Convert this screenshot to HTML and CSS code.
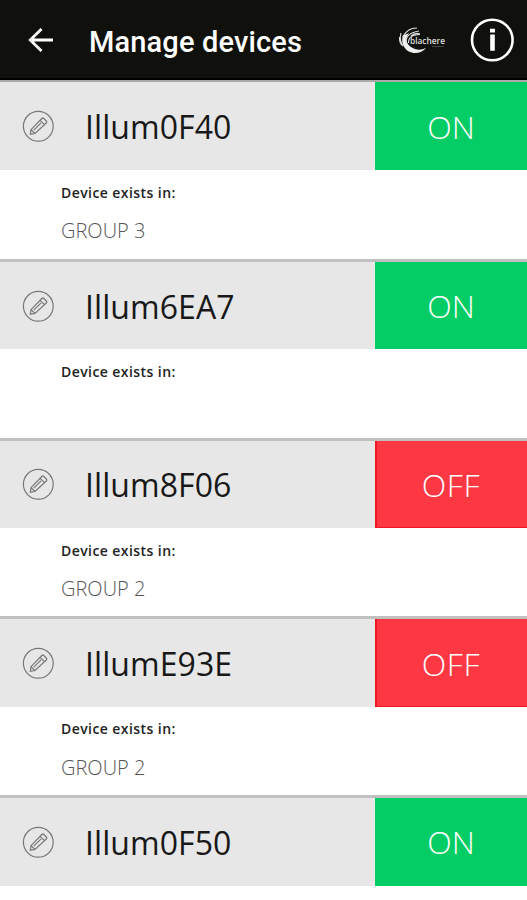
FILE: index.html
```html
<!DOCTYPE html>
<html lang="en">
<head>
<meta charset="utf-8">
<title>Manage devices</title>
<link rel="stylesheet" href="styles.css">
</head>
<body>
<svg class="defs" aria-hidden="true">
  <symbol id="edit" viewBox="0 0 32 32">
    <circle cx="16.300" cy="16.300" r="14.900"/>
    <path d="M8.300 24.300L9 19.700 19.800 8.500q1-1 2 0l2.500 2.500q1 1 0 2L13 23.400zM18.200 10.400l4.200 4.200M9 19.700l3.900 3.700M11.800 20.200l7.300-7.400"/>
  </symbol>
</svg>
<header class="bar">
  <svg class="back" viewBox="0 0 26 26"><path d="M25 13H2M13.500 2L2.300 13 13.500 24"/></svg>
  <h1 class="title">Manage devices</h1>
  <svg class="logo" viewBox="0 0 50 30">
    <path d="M5 10C2 19 8 28 17 28q7 0 11-5-6 3-11 1C9 21 6 15 11 8q-4 2-6 2z"/>
    <path class="ray" d="M1.500 12q-.5 6 3.500 9M3 8q-2 7 2 13M5 12Q9 3 19 3M8 17Q8 8 21 6M10.500 18Q10 10 22 9.500M13 11q4-4 9-2"/>
    <text x="12" y="18.500" textLength="35" lengthAdjust="spacingAndGlyphs">blachere</text>
    <path class="tag" d="M34 21.500h12"/>
  </svg>
  <svg class="info" viewBox="0 0 44 44"><circle cx="22.300" cy="22" r="20.300"/><path class="dot" d="M20 10.800h5v3.700h-5zM20.200 16.500h4.600v16.200h-4.600z"/></svg>
</header>
<main>
  <section class="device">
    <div class="head"><svg class="edit"><use href="#edit"/></svg><h2 class="name">Illum0F40</h2><div class="state on">ON</div></div>
    <p class="label">Device exists in:</p><p class="group">GROUP 3</p>
  </section>
  <section class="device">
    <div class="head"><svg class="edit"><use href="#edit"/></svg><h2 class="name">Illum6EA7</h2><div class="state on">ON</div></div>
    <p class="label">Device exists in:</p>
  </section>
  <section class="device">
    <div class="head"><svg class="edit"><use href="#edit"/></svg><h2 class="name">Illum8F06</h2><div class="state off">OFF</div></div>
    <p class="label">Device exists in:</p><p class="group">GROUP 2</p>
  </section>
  <section class="device">
    <div class="head"><svg class="edit"><use href="#edit"/></svg><h2 class="name">IllumE93E</h2><div class="state off">OFF</div></div>
    <p class="label">Device exists in:</p><p class="group">GROUP 2</p>
  </section>
  <section class="device">
    <div class="head"><svg class="edit"><use href="#edit"/></svg><h2 class="name">Illum0F50</h2><div class="state on">ON</div></div>
  </section>
</main>
</body>
</html>
```
FILE: styles.css
```css
* { box-sizing: border-box; }
body { margin: 0; height: 900px; overflow: hidden; background: #fff; font-family: "Open Sans", sans-serif; }
h1, h2, p { margin: 0; font-weight: 400; }
.defs { position: absolute; width: 0; height: 0; }
.bar { display: flex; align-items: center; height: 80px; padding: 2px 13px 0 28px; background: #10110c; border-bottom: 2px solid #000; }
.back { width: 26px; height: 26px; fill: none; stroke: #fff; stroke-width: 2.800; }
.title { margin: 3px 0 0 35px; width: 308px; font: 500 29px/36px Roboto, sans-serif; letter-spacing: .15px; color: #fff; }
.logo { width: 50px; height: 30px; margin-left: 1px; fill: #eee; }
.logo text { font: 600 9px "Open Sans", sans-serif; fill: #ddd; }
.logo .ray { fill: none; stroke: #ddd; stroke-width: 1.100; }
.logo .tag { stroke: #444; }
.info { width: 44px; height: 44px; margin-left: auto; fill: none; stroke: #fff; stroke-width: 2.600; }
.info .dot { fill: #fff; stroke: none; }
.device { height: 178.750px; border-top: 3px solid #bfc0bf; }
.device:first-child { border-top-color: #aaa; border-top-width: 2px; }
.device:first-child .head { height: 88px; }
.device:last-child { height: auto; }
.head { display: flex; align-items: center; height: 87.500px; padding-left: 22px; background: #e7e7e7; }
.edit { width: 32px; height: 32px; fill: none; stroke: #777; stroke-width: 1.200; }
.name { margin: 2px 0 0 31px; flex: 1; font-size: 32px; line-height: 44px; letter-spacing: .08px; color: #181818; }
.state { width: 152px; height: 100%; display: flex; align-items: center; justify-content: center; color: #fff; font-size: 32px; font-weight: 300; }
.on { background: #04cd65; }
.off { background: #fd3842; box-shadow: inset 2px -1px #f01820; letter-spacing: .6px; }
.label { margin: 12.500px 0 0 61px; font-size: 14px; line-height: 20px; font-weight: 600; letter-spacing: .43px; color: #222; }
.group { margin: 14.500px 0 0 61px; font-size: 20px; line-height: 28px; font-weight: 300; color: #555; }
```
